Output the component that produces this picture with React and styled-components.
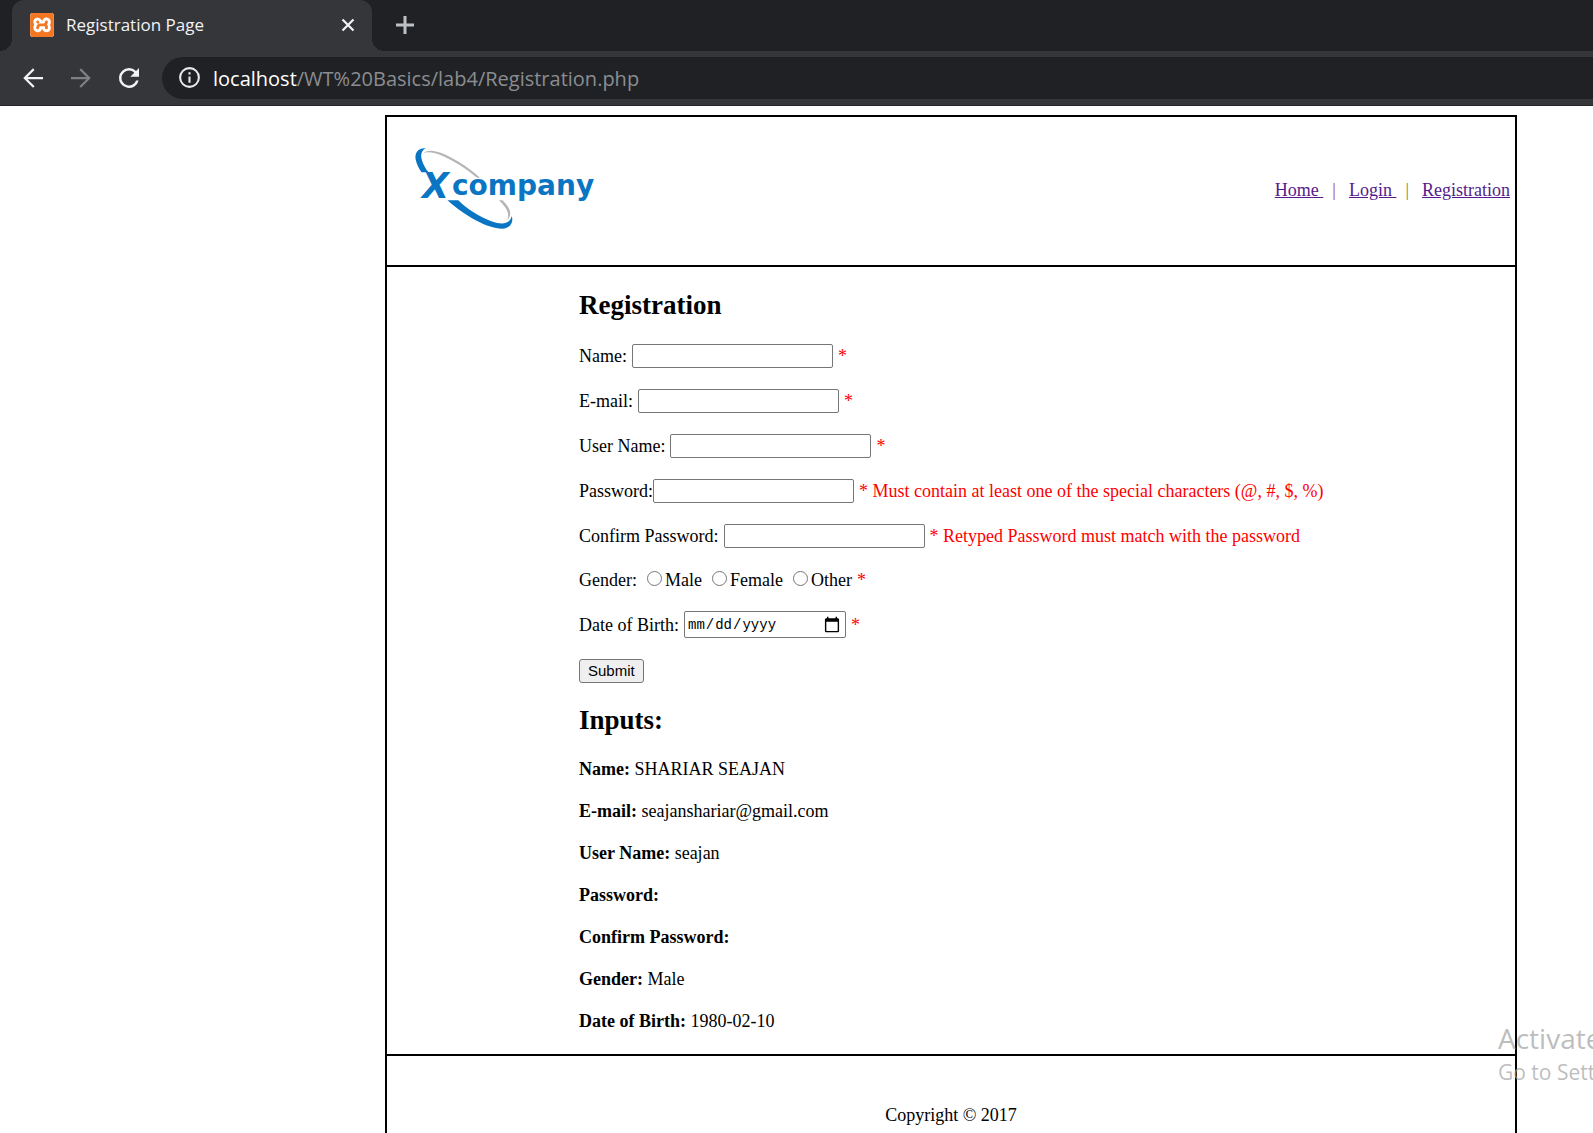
import React from "react";
import styled, { createGlobalStyle } from "styled-components";
import { SiXampp } from "react-icons/si";

const serif = '"Liberation Serif", "Times New Roman", serif';
const ui = '"Open Sans", "Segoe UI", sans-serif';

const GlobalStyle = createGlobalStyle`
  *, *::before, *::after { box-sizing: border-box; }
  body { margin: 0; background: #fff; }
`;

const Window = styled.div`
  position: relative;
  display: flex;
  flex-direction: column;
  height: 100vh;
  overflow: hidden;
  font: 18px/21px ${serif};
  color: #000;
`;

/* Browser chrome */
const TabStrip = styled.div`
  flex: none;
  display: flex;
  align-items: stretch;
  height: 51px;
  padding-left: 12px;
  background: #202124;
`;

const Tab = styled.div`
  position: relative;
  display: flex;
  align-items: center;
  width: 360px;
  padding: 0 17px 2px 18px;
  border-radius: 12px 12px 0 0;
  background: #35363a;

  &::before,
  &::after {
    content: "";
    position: absolute;
    bottom: 0;
    width: 12px;
    height: 12px;
  }
  &::before {
    right: 100%;
    background: radial-gradient(circle at 0 0, #202124 12px, #35363a 12px);
  }
  &::after {
    left: 100%;
    background: radial-gradient(circle at 100% 0, #202124 12px, #35363a 12px);
  }
`;

const Favicon = styled(SiXampp)`
  flex: none;
  width: 24px;
  height: 24px;
  border-radius: 3px;
  background: #fff;
  color: #f37623;
`;

const TabTitle = styled.span`
  flex: 1;
  margin-left: 12px;
  font: 17px/24px ${ui};
  color: #f1f3f4;
  white-space: nowrap;
`;

const IconButton = styled.button`
  flex: none;
  display: grid;
  place-items: center;
  width: ${(p) => p.$size}px;
  height: ${(p) => p.$size}px;
  padding: 0;
  border: 0;
  background: none;
  color: ${(p) => p.$color || "#f1f3f4"};

  svg { display: block; }
`;

const NewTab = styled.div`
  display: flex;
  align-items: center;
  padding: 0 0 2px 18px;
`;

const Toolbar = styled.div`
  flex: none;
  display: flex;
  align-items: center;
  gap: 18px;
  height: 55px;
  padding: 0 0 1px 18px;
  border-bottom: 1px solid #242528;
  background: #35363a;
`;

const Omnibox = styled.div`
  flex: 1;
  display: flex;
  align-items: center;
  gap: 11px;
  height: 42px;
  padding-left: 15px;
  border-radius: 21px 0 0 21px;
  background: #202124;
  color: #e8eaed;
`;

const Address = styled.span`
  padding-top: 2px;
  font: 20px/28px ${ui};
  color: #8b8d91;
  white-space: nowrap;
`;

const Host = styled.span`
  color: #fff;
`;

/* Page */
const Frame = styled.div`
  flex: none;
  margin: 9px 76px 0 385px;
  border: 2px solid #000;
`;

const Header = styled.header`
  display: flex;
  align-items: center;
  justify-content: space-between;
  height: 150px;
  padding: 0 5px 2px 24px;
  border-bottom: 2px solid #000;
`;

const Nav = styled.nav`
  display: flex;
  white-space: pre;
`;

const NavLink = styled.a`
  color: #551a8b;
  text-decoration: underline;
`;

const Divider = styled.span`
  margin: 0 13px 0 9px;
  color: ${(p) => p.$color};
`;

const Main = styled.main`
  padding: 22px 0 22px 192px;
  border-bottom: 2px solid #000;
`;

const Heading = styled.h2`
  margin: 0 0 22px;
  font-size: 27px;
  line-height: 33px;
`;

const Form = styled.form`
  display: flex;
  flex-direction: column;
  align-items: flex-start;
  gap: 21px;
  margin-bottom: 21px;
`;

const Row = styled.div`
  display: flex;
  align-items: center;
  gap: 5px;
  min-height: 21px;
  line-height: 20px;
  white-space: nowrap;
`;

const Pair = styled.div`
  display: flex;
  align-items: center;
  gap: ${(p) => (p.$tight ? 0 : 5)}px;
`;

const control = `
  margin: 0;
  border: 1px solid #767676;
  border-radius: 2px;
  background: #fff;
  color: #000;
`;

const TextInput = styled.input`
  ${control}
  width: 201px;
  height: 24px;
  padding: 1px 2px;
  font: 15px/18px "Liberation Sans", Arial, sans-serif;
`;

const DateInput = styled.input`
  ${control}
  width: 162px;
  height: 27px;
  padding: 0 3px 0 2px;
  font: 14px/18px "Liberation Mono", monospace;

  &::-webkit-calendar-picker-indicator {
    width: 18px;
    height: 18px;
    padding: 1px;
  }
`;

const Choice = styled.label`
  display: flex;
  align-items: center;
`;

const Radio = styled.input`
  width: 15px;
  height: 15px;
  margin: 0 3px 2px 5px;
`;

const Note = styled.span`
  color: #f00;
`;

const Submit = styled.button`
  height: 24px;
  padding: 0 8px;
  border: 1px solid #767676;
  border-radius: 3px;
  background: #efefef;
  color: #000;
  font: 15px/18px "Liberation Sans", Arial, sans-serif;
`;

const Results = styled.div`
  display: flex;
  flex-direction: column;
  gap: 21px;
`;

const Result = styled.p`
  margin: 0;
`;

const Footer = styled.footer`
  padding: 49px 0;
  text-align: center;
`;

const Watermark = styled.aside`
  position: absolute;
  right: 0;
  bottom: 45px;
  width: 95px;
  overflow: hidden;
  font-family: ${ui};
  color: rgba(160, 160, 160, 0.7);
  white-space: nowrap;
  pointer-events: none;
`;

const WatermarkTitle = styled.div`
  font-size: 28px;
  line-height: 36px;
`;

const WatermarkText = styled.div`
  font-size: 21px;
  line-height: 32px;
`;

const MaterialIcon = ({ d, size }) => (
  <svg width={size} height={size} viewBox="0 0 24 24" fill="currentColor" aria-hidden="true">
    <path d={d} />
  </svg>
);

const BACK = "M20 11.1H7.6l5.6-5.6L12 4.2 4.2 12l7.8 7.8 1.3-1.3-5.7-5.6H20z";
const FORWARD = "M4 11.1h12.4l-5.6-5.6L12 4.2l7.8 7.8-7.8 7.8-1.3-1.3 5.7-5.6H4z";
const RELOAD =
  "M17.65 6.35A7.96 7.96 0 0 0 12 4a8 8 0 1 0 7.73 10h-2.08A6 6 0 1 1 12 6c1.66 0 3.14.69 4.22 1.78L13 11h7V4z";
const INFO =
  "M11 7h2v2h-2zm0 4h2v6h-2zm1-9a10 10 0 1 0 0 20 10 10 0 0 0 0-20zm0 18a8 8 0 1 1 0-16 8 8 0 0 1 0 16z";

const Logo = () => (
  <svg width="190" height="100" viewBox="0 0 190 100" role="img" aria-label="Xcompany">
    <g fill="#b5b5b5">
      <path d="M12.3 13.5C15 10 22 9 34 14.500C46 20 59 28.500 69 37.700H66C55 28.500 44 21.500 33 16.500C22 11.500 16 11.500 12.300 13.500Z" />
      <path d="M88 60.300H91.500C98 66.500 102.500 74 96.200 80C99 74 96 68 88 60.300Z" />
    </g>
    <g fill="#0a75c2">
      <path d="M15 8.300C7 7.500 3.200 13 4.800 20C5.600 24 7.800 28.500 10.500 32.300H17.500C12 25.500 8.500 16 11 12C12 10 13.500 9 15 8.300Z" />
      <path d="M36.500 60.300H47.300C55 68 68 77 81 81.500C92 85.500 99.500 83 100.700 76C102.800 82 99.500 88.500 91 88.700C76 88.500 54 76 36.500 60.300Z" />
      <text x="11" y="58" fontFamily="DejaVu Sans, sans-serif" fontWeight="700" fontStyle="oblique" fontSize="35">X</text>
      <text x="41" y="55" fontFamily="DejaVu Sans, sans-serif" fontWeight="700" fontSize="28">company</text>
    </g>
  </svg>
);

const fields = [
  { id: "name", label: "Name:", type: "text", note: "*" },
  { id: "email", label: "E-mail:", type: "text", note: "*" },
  { id: "username", label: "User Name:", type: "text", note: "*" },
  {
    id: "password",
    label: "Password:",
    type: "password",
    tight: true,
    note: "* Must contain at least one of the special characters (@, #, $, %)",
  },
  {
    id: "confirm",
    label: "Confirm Password:",
    type: "password",
    note: "* Retyped Password must match with the password",
  },
];

const results = [
  ["Name:", "SHARIAR SEAJAN"],
  ["E-mail:", "seajanshariar@gmail.com"],
  ["User Name:", "seajan"],
  ["Password:", ""],
  ["Confirm Password:", ""],
  ["Gender:", "Male"],
  ["Date of Birth:", "1980-02-10"],
];

export default function App() {
  return (
    <Window>
      <GlobalStyle />
      <TabStrip>
        <Tab>
          <Favicon aria-hidden="true" />
          <TabTitle>Registration Page</TabTitle>
          <IconButton $size={14} aria-label="Close tab">
            <svg width="14" height="14" viewBox="0 0 14 14" stroke="currentColor" strokeWidth="2.2">
              <path d="M1.500 1.500l11 11M12.500 1.500l-11 11" />
            </svg>
          </IconButton>
        </Tab>
        <NewTab>
          <IconButton $size={30} $color="#bdc1c6" aria-label="New tab">
            <svg width="18" height="18" viewBox="0 0 18 18" stroke="currentColor" strokeWidth="3">
              <path d="M9 0v18M0 9h18" />
            </svg>
          </IconButton>
        </NewTab>
      </TabStrip>
      <Toolbar>
        <IconButton $size={30} aria-label="Back"><MaterialIcon d={BACK} size={30} /></IconButton>
        <IconButton $size={30} $color="#7f8084" aria-label="Forward"><MaterialIcon d={FORWARD} size={30} /></IconButton>
        <IconButton $size={30} aria-label="Reload"><MaterialIcon d={RELOAD} size={30} /></IconButton>
        <Omnibox>
          <MaterialIcon d={INFO} size={25} />
          <Address><Host>localhost</Host>/WT%20Basics/lab4/Registration.php</Address>
        </Omnibox>
      </Toolbar>

      <Frame>
        <Header>
          <Logo />
          <Nav>
            <NavLink href="#home">{"Home "}</NavLink>
            <Divider $color="#a84848">|</Divider>
            <NavLink href="#login">{"Login "}</NavLink>
            <Divider $color="#a87820">|</Divider>
            <NavLink href="#registration">Registration</NavLink>
          </Nav>
        </Header>
        <Main>
          <Heading>Registration</Heading>
          <Form onSubmit={(e) => e.preventDefault()}>
            {fields.map((f) => (
              <Row key={f.id}>
                <Pair $tight={f.tight}>
                  <label htmlFor={f.id}>{f.label}</label>
                  <TextInput id={f.id} name={f.id} type={f.type} />
                </Pair>
                <Note>{f.note}</Note>
              </Row>
            ))}
            <Row role="radiogroup" aria-labelledby="gender">
              <span id="gender">Gender:</span>
              {["Male", "Female", "Other"].map((g) => (
                <Choice key={g}>
                  <Radio type="radio" name="gender" value={g} />
                  {g}
                </Choice>
              ))}
              <Note>*</Note>
            </Row>
            <Row>
              <label htmlFor="dob">Date of Birth:</label>
              <DateInput id="dob" name="dob" type="date" />
              <Note>*</Note>
            </Row>
            <Submit type="submit">Submit</Submit>
          </Form>
          <Heading>Inputs:</Heading>
          <Results>
            {results.map(([label, value]) => (
              <Result key={label}><b>{label}</b> {value}</Result>
            ))}
          </Results>
        </Main>
        <Footer>Copyright © 2017</Footer>
      </Frame>

      <Watermark>
        <WatermarkTitle>Activate Windows</WatermarkTitle>
        <WatermarkText>Go to Settings to activate Windows.</WatermarkText>
      </Watermark>
    </Window>
  );
}
